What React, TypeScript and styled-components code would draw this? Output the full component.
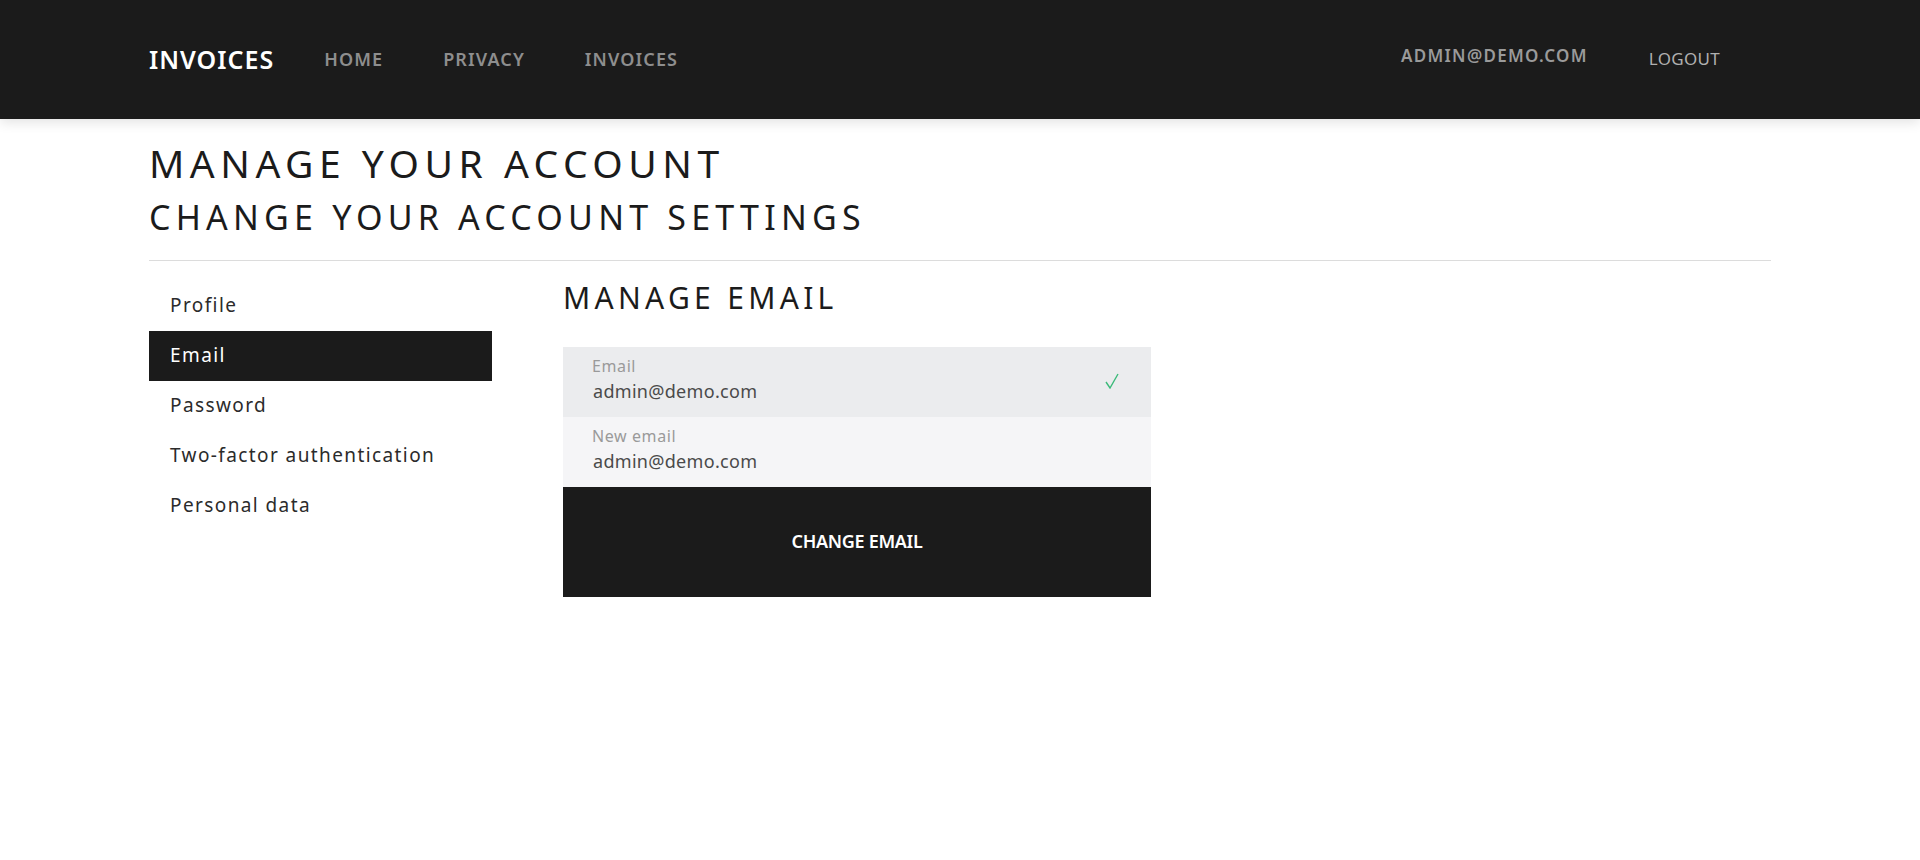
import React from "react";
import styled, { createGlobalStyle } from "styled-components";

const GlobalStyle = createGlobalStyle`
  html, body { margin: 0; padding: 0; background: #ffffff; }
  body { font-family: "Noto Sans", "Open Sans", sans-serif; color: #1b1b1b; }
  * { box-sizing: border-box; }
`;

const Header = styled.header`
  position: relative;
  z-index: 2;
  height: 119px;
  background: #1b1b1b;
  box-shadow: 0 3px 12px rgba(0, 0, 0, 0.12);
`;

const HeaderInner = styled.div`
  height: 100%;
  padding: 0 149px 2px;
  display: flex;
  align-items: center;
`;

const Brand = styled.a`
  color: #ffffff;
  font-size: 25px;
  font-weight: 600;
  letter-spacing: 1px;
  margin-right: 50px;
  text-decoration: none;
`;

const NavList = styled.nav`
  display: flex;
  align-items: center;
  gap: 60px;
`;

const NavLink = styled.a`
  color: #8e8e8e;
  font-size: 18px;
  font-weight: 600;
  letter-spacing: 1.1px;
  text-decoration: none;
`;

const RightNav = styled.div`
  margin-left: auto;
  margin-right: 51px;
  display: flex;
  align-items: center;
  gap: 61px;
`;

const UserLink = styled.a<{ $light?: boolean }>`
  color: ${(p) => (p.$light ? "#b0b0b0" : "#9a9a9a")};
  font-size: 17px;
  font-weight: ${(p) => (p.$light ? 400 : 600)};
  letter-spacing: ${(p) => (p.$light ? "0.3px" : "1.3px")};
  text-decoration: none;
  transform: translateY(${(p) => (p.$light ? "0" : "-3px")});
`;

const Main = styled.main`
  padding: 0 149px;
`;

const Title = styled.h1`
  margin: 20px 0 0;
  font-size: 39px;
  line-height: 48px;
  font-weight: 400;
  letter-spacing: 5.5px;
  text-transform: uppercase;
`;

const Subtitle = styled.h2`
  margin: 8px 0 0;
  font-size: 34px;
  line-height: 44px;
  font-weight: 400;
  letter-spacing: 5.2px;
  text-transform: uppercase;
`;

const Rule = styled.hr`
  margin: 21px 0 0;
  border: 0;
  border-top: 1px solid #dcdcdc;
`;

const Row = styled.div`
  display: flex;
  gap: 71px;
`;

const Sidebar = styled.ul`
  list-style: none;
  margin: 20px 0 0;
  padding: 0;
  width: 343px;
  flex-shrink: 0;
`;

const SideItem = styled.li<{ $active?: boolean }>`
  height: 50px;
  display: flex;
  align-items: center;
  padding-left: 21px;
  padding-bottom: 2px;
  font-size: 19px;
  letter-spacing: 1.4px;
  color: ${(p) => (p.$active ? "#ffffff" : "#2b2b2b")};
  background: ${(p) => (p.$active ? "#1b1b1b" : "transparent")};
`;

const Content = styled.section`
  width: 588px;
`;

const SectionTitle = styled.h3`
  margin: 17px 0 0;
  font-size: 30px;
  line-height: 40px;
  font-weight: 400;
  letter-spacing: 4.3px;
  text-transform: uppercase;
`;

const Form = styled.form`
  margin-top: 29px;
  display: flex;
  flex-direction: column;
`;

const Field = styled.div<{ $tone: "dark" | "light" }>`
  position: relative;
  height: 70px;
  padding: 8px 29px 0;
  background: ${(p) => (p.$tone === "dark" ? "#ebecee" : "#f5f5f7")};
`;

const FieldLabel = styled.div`
  font-size: 16px;
  line-height: 23px;
  color: #9a9a9a;
  letter-spacing: 0.6px;
`;

const FieldValue = styled.div`
  font-size: 18px;
  line-height: 26px;
  color: #4a4a4a;
  letter-spacing: 0.3px;
  margin-left: 1px;
`;

const Check = styled.svg`
  position: absolute;
  right: 32px;
  top: 26px;
`;

const SubmitButton = styled.button`
  height: 110px;
  border: 0;
  padding: 0 0 2px;
  background: #1b1b1b;
  color: #ffffff;
  font-family: inherit;
  font-size: 18px;
  font-weight: 600;
  letter-spacing: -0.3px;
  text-transform: uppercase;
  cursor: pointer;
`;

export default function App() {
  const items = ["Profile", "Email", "Password", "Two-factor authentication", "Personal data"];
  return (
    <>
      <GlobalStyle />
      <Header>
        <HeaderInner>
          <Brand href="#">INVOICES</Brand>
          <NavList>
            <NavLink href="#">HOME</NavLink>
            <NavLink href="#">PRIVACY</NavLink>
            <NavLink href="#">INVOICES</NavLink>
          </NavList>
          <RightNav>
            <UserLink href="#">ADMIN@DEMO.COM</UserLink>
            <UserLink href="#" $light>
              LOGOUT
            </UserLink>
          </RightNav>
        </HeaderInner>
      </Header>
      <Main>
        <Title>Manage your account</Title>
        <Subtitle>Change your account settings</Subtitle>
        <Rule />
        <Row>
          <Sidebar>
            {items.map((it) => (
              <SideItem key={it} $active={it === "Email"}>
                {it}
              </SideItem>
            ))}
          </Sidebar>
          <Content>
            <SectionTitle>Manage email</SectionTitle>
            <Form onSubmit={(e) => e.preventDefault()}>
              <Field $tone="dark">
                <FieldLabel>Email</FieldLabel>
                <FieldValue>admin@demo.com</FieldValue>
                <Check width="14" height="16" viewBox="0 0 14 16">
                  <polyline points="1,9 5,15 13,1" fill="none" stroke="#3cba7a" strokeWidth="1.4" />
                </Check>
              </Field>
              <Field $tone="light">
                <FieldLabel>New email</FieldLabel>
                <FieldValue>admin@demo.com</FieldValue>
              </Field>
              <SubmitButton type="submit">Change email</SubmitButton>
            </Form>
          </Content>
        </Row>
      </Main>
    </>
  );
}
